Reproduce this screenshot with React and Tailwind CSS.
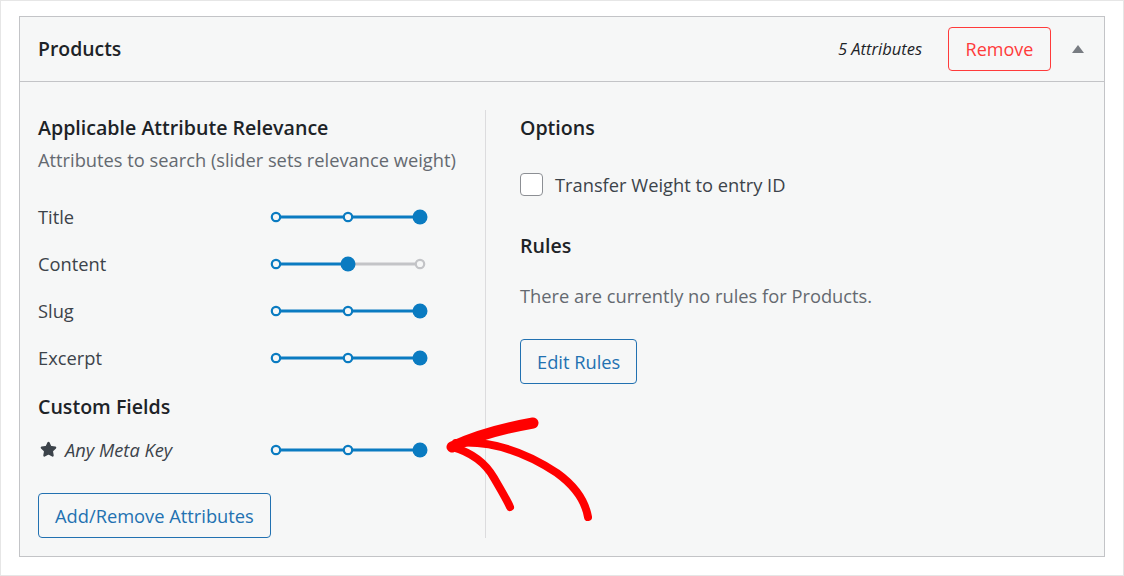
import { Star } from 'lucide-react';

const font = { fontFamily: '"Open Sans", "Noto Sans", sans-serif' };

const attributes = [
  { label: 'Title', value: 2 },
  { label: 'Content', value: 1 },
  { label: 'Slug', value: 2 },
  { label: 'Excerpt', value: 2 },
];

function Slider({ value }) {
  const xs = [6, 78, 150];
  const blue = '#0a7bc1';
  const gray = '#c3c4c7';
  return (
    <svg width="160" height="18" viewBox="0 0 160 18" className="shrink-0">
      <line x1={xs[0]} y1="9" x2={xs[value]} y2="9" stroke={blue} strokeWidth="3" />
      {value < 2 && <line x1={xs[value]} y1="9" x2={xs[2]} y2="9" stroke={gray} strokeWidth="3" />}
      {xs.map((x, i) =>
        i === value ? (
          <circle key={i} cx={x} cy="9" r="7.5" fill={blue} />
        ) : (
          <circle key={i} cx={x} cy="9" r="4.2" fill="#f6f7f7" stroke={i < value ? blue : gray} strokeWidth="2.2" />
        )
      )}
    </svg>
  );
}

function AttrRow({ label, value, icon, italic }) {
  return (
    <div className="flex items-center h-[47px]">
      <div className={`w-[232px] flex items-center gap-2 text-[18.3px] text-[#3c434a] ${italic ? 'italic' : ''}`}>
        {icon}
        {label}
      </div>
      <Slider value={value} />
    </div>
  );
}

export default function App() {
  return (
    <div className="w-[1124px] h-[576px] bg-white border border-[#e6e6e6] pt-[15px] pl-[18px] pr-[18px]" style={font}>
      <div className="bg-[#f6f7f7] border border-[#c3c4c7] h-[541px] flex flex-col">
        {/* header */}
        <div className="h-[65px] border-b border-[#c3c4c7] flex items-center pl-[18px] pr-[20px]">
          <h2 className="text-[19.4px] font-semibold text-[#1d2327] flex-1">Products</h2>
          <span className="italic text-[16.5px] text-[#1d2327] mr-[26px]">5 Attributes</span>
          <button className="h-[44px] w-[103px] border border-[#ff3b3b] rounded-[4px] text-[18px] text-[#ff3b3b] bg-[#f6f7f7]">
            Remove
          </button>
          <span className="ml-[21px] w-0 h-0 border-l-[6px] border-r-[6px] border-b-[8px] border-l-transparent border-r-transparent border-b-[#787c82]"></span>
        </div>

        {/* body */}
        <div className="flex px-[18px] pt-[28px] pb-[18px] flex-1">
          <div className="w-[448px] border-r border-[#dcdcde] flex flex-col">
            <h3 className="text-[19.6px] font-semibold text-[#1d2327] leading-[22px] mt-[7px]">Applicable Attribute Relevance</h3>
            <p className="text-[18.3px] text-[#646970] leading-[22px] mt-[10px]">
              Attributes to search (slider sets relevance weight)
            </p>
            <div className="mt-[22px]">
              {attributes.map((a) => (
                <AttrRow key={a.label} label={a.label} value={a.value} />
              ))}
            </div>
            <h3 className="text-[19.6px] font-semibold text-[#1d2327] leading-[24px] mt-[14px]">Custom Fields</h3>
            <div className="mt-[7px]">
              <AttrRow
                label="Any Meta Key"
                value={2}
                italic
                icon={<Star size={17} fill="#3c434a" stroke="#3c434a" className="ml-[2px]" />}
              />
            </div>
            <div className="mt-[20px]">
              <button className="h-[45px] px-[16px] border border-[#2271b1] rounded-[4px] text-[18.3px] text-[#2271b1] bg-[#f6f7f7]">
                Add/Remove Attributes
              </button>
            </div>
          </div>

          <div className="flex-1 pl-[34px] flex flex-col">
            <h3 className="text-[19.6px] font-semibold text-[#1d2327] leading-[22px] mt-[7px]">Options</h3>
            <label className="flex items-center mt-[32px] gap-[12px]">
              <span className="w-[23px] h-[23px] rounded-[4px] border border-[#8c8f94] bg-white"></span>
              <span className="text-[18.3px] text-[#3c434a]">Transfer Weight to entry ID</span>
            </label>
            <h3 className="text-[19.6px] font-semibold text-[#1d2327] leading-[22px] mt-[37px]">Rules</h3>
            <p className="text-[18.3px] text-[#646970] leading-[22px] mt-[28px]">There are currently no rules for Products.</p>
            <div className="mt-[32px]">
              <button className="h-[45px] px-[16px] border border-[#2271b1] rounded-[4px] text-[18.3px] text-[#2271b1] bg-[#f6f7f7]">
                Edit Rules
              </button>
            </div>
          </div>
        </div>
      </div>

      {/* annotation arrow */}
      <svg className="absolute left-0 top-0 pointer-events-none" width="1124" height="576">
        <g fill="none" stroke="#ff0000" strokeLinecap="round" strokeLinejoin="round">
          <path d="M452 447 C475 436 505 428 533 423" strokeWidth="11" />
          <path d="M452 447 C470 452 485 462 494 478 C501 490 507 500 510 507" strokeWidth="8" />
          <path d="M456 443 C495 440 530 455 557 473 C575 486 585 500 588 517" strokeWidth="8" />
        </g>
      </svg>
    </div>
  );
}
